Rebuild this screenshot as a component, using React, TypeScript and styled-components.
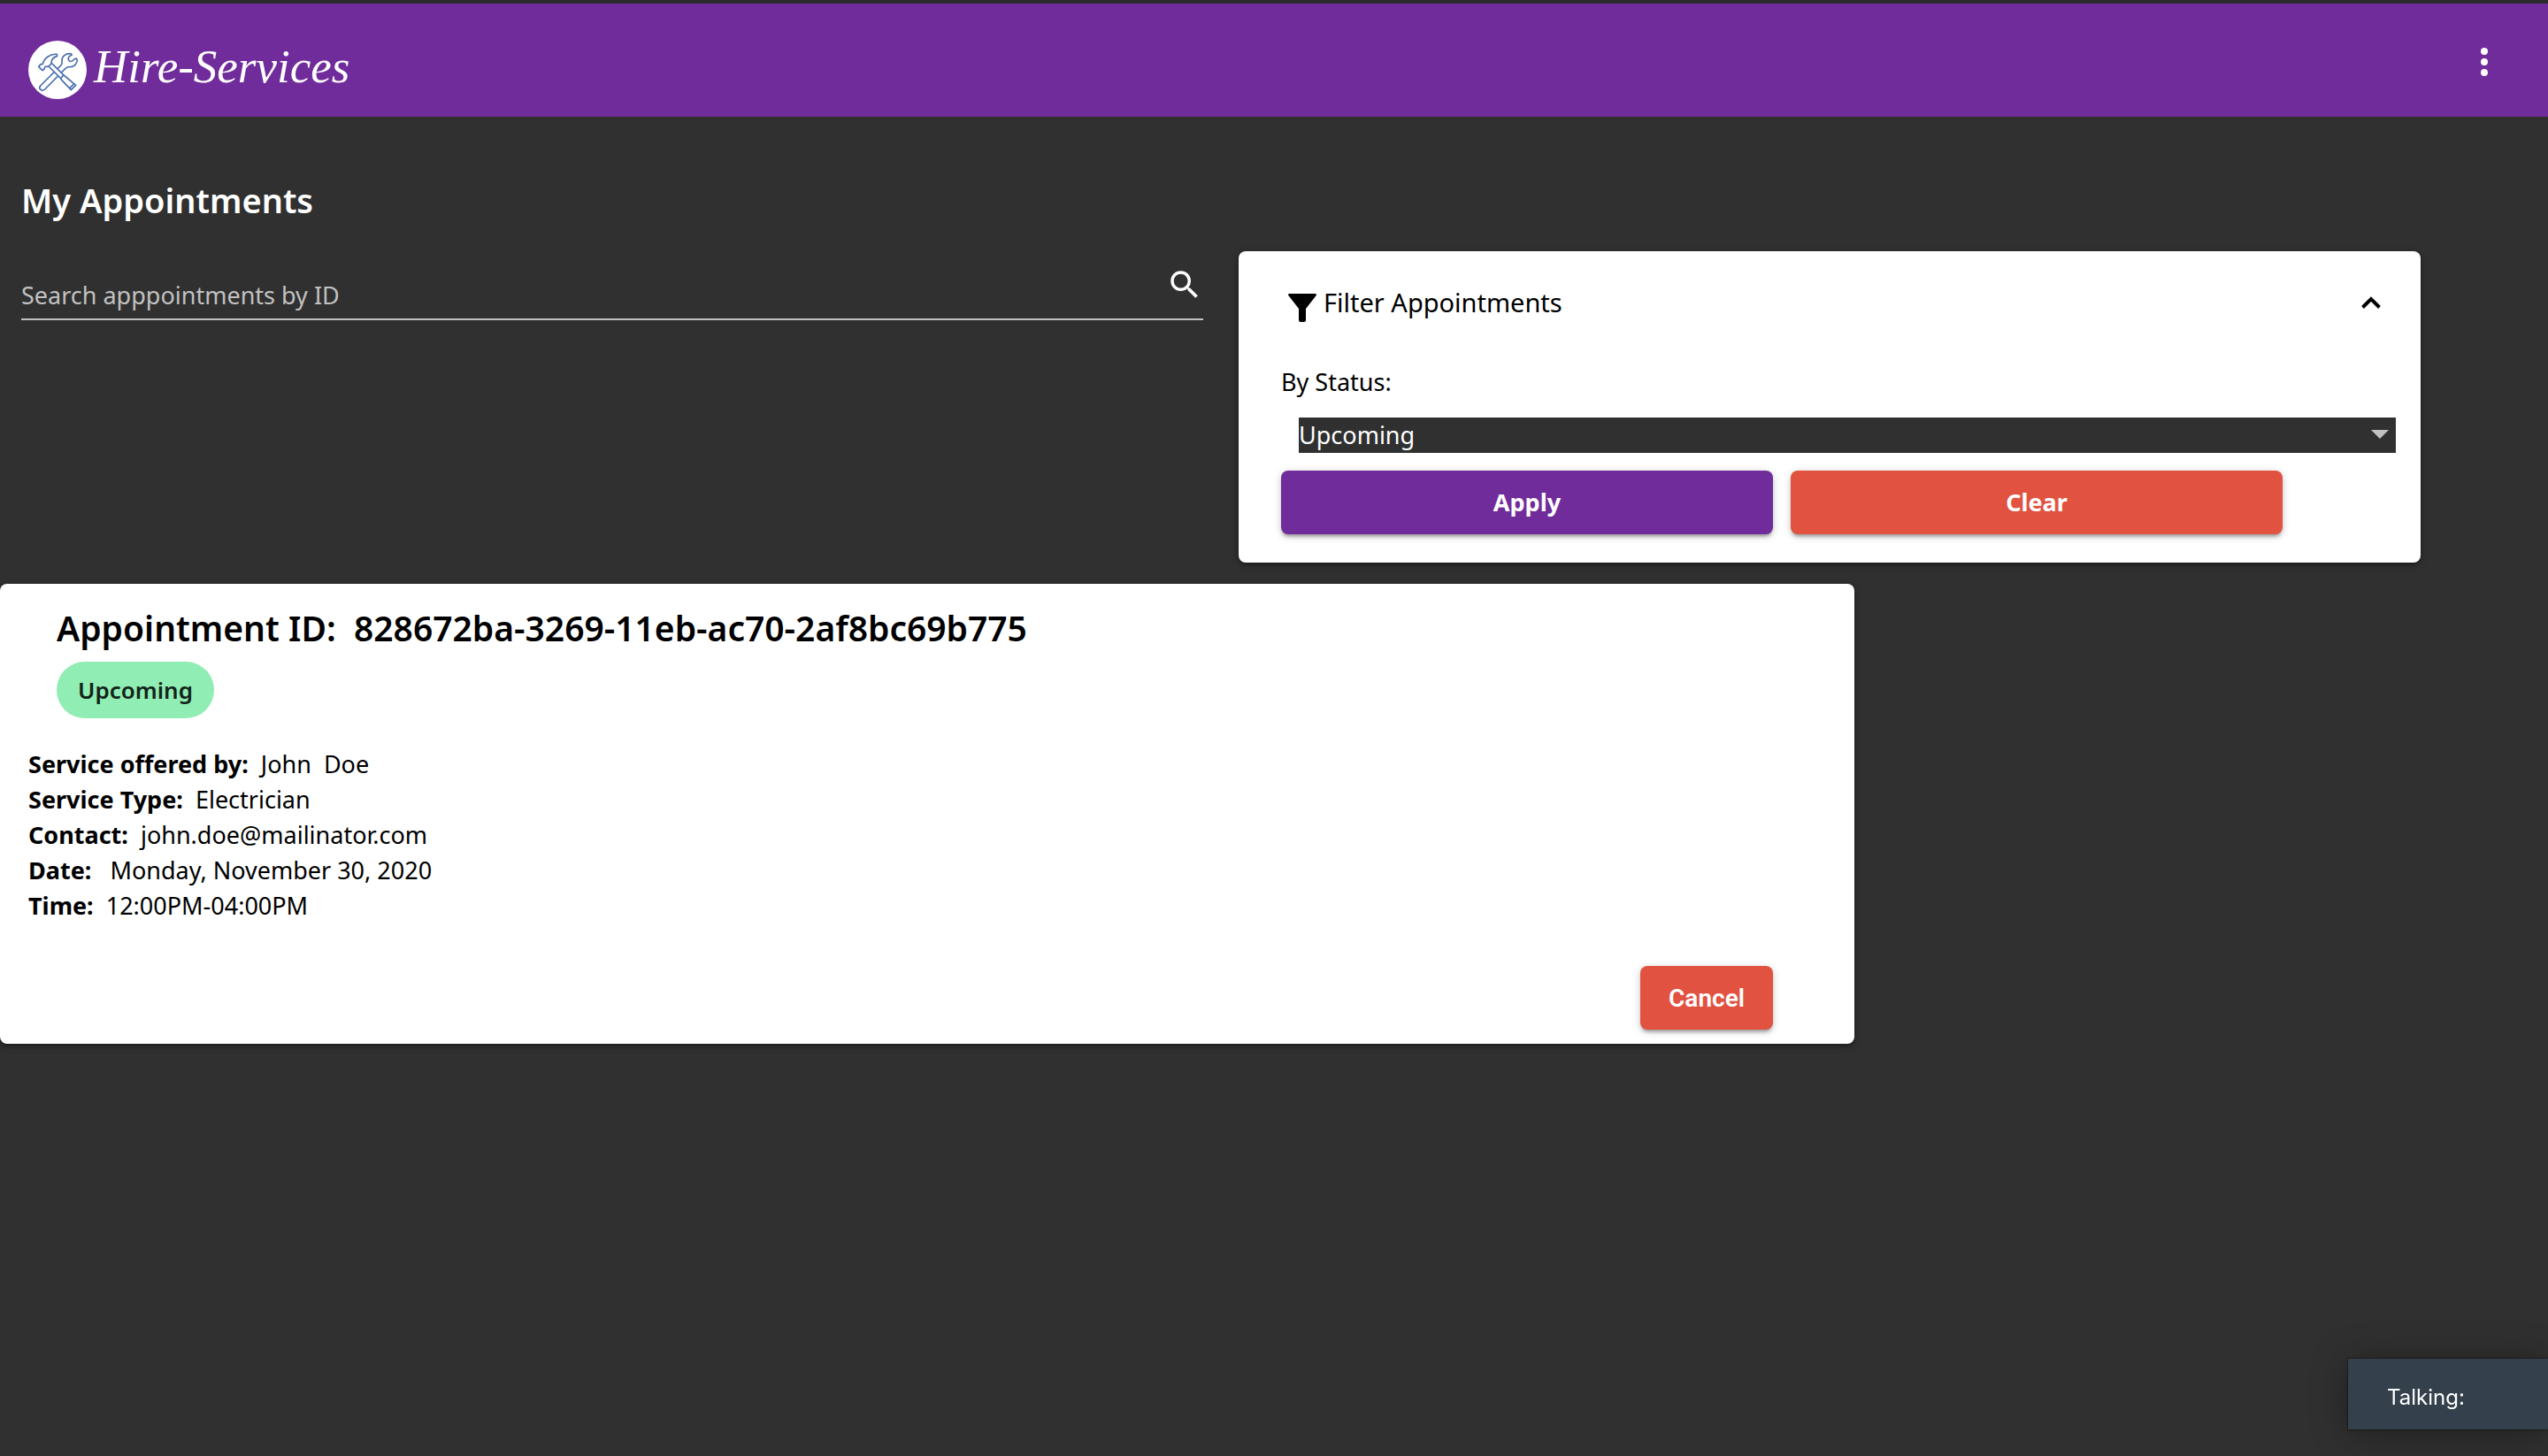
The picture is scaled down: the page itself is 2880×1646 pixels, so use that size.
import React, { useState } from "react";
import styled, { createGlobalStyle } from "styled-components";

const sans = `"Noto Sans", "Open Sans", sans-serif`;

const GlobalStyle = createGlobalStyle`
  *, *::before, *::after { box-sizing: border-box; }
  body {
    margin: 0;
    min-height: 100vh;
    background: #303030;
    color: #fff;
    font-family: ${sans};
    font-size: 27px;
    line-height: 40px;
  }
  h1, h2, p, dl, dd { margin: 0; }
  button, input, select { font: inherit; }
`;

const Header = styled.header`
  display: flex;
  align-items: center;
  justify-content: space-between;
  height: 132px;
  padding: 0 52px 0 32px;
  background: #712c9b;
  border-top: 4px solid #2b2b2d;
`;

const Brand = styled.a`
  display: flex;
  align-items: center;
  gap: 8px;
  padding-top: 22px;
  color: #fff;
  text-decoration: none;
`;

const BrandName = styled.span`
  font-family: "Liberation Serif", serif;
  font-style: italic;
  font-size: 53px;
  line-height: 66px;
  padding-bottom: 8px;
`;

const IconButton = styled.button`
  display: flex;
  align-items: center;
  justify-content: center;
  padding: 0;
  border: 0;
  background: none;
  color: inherit;
  cursor: pointer;
`;

const MenuButton = styled(IconButton)`
  width: 40px;
  height: 48px;
  padding-top: 4px;
`;

const Title = styled.h1`
  padding: 70px 24px 0;
  font-size: 38px;
  font-weight: 600;
  line-height: 48px;
`;

const Controls = styled.section`
  display: grid;
  grid-template-columns: 1fr 1fr;
  align-items: start;
  gap: 40px;
  padding: 34px 5% 24px 24px;
`;

const SearchField = styled.form`
  display: flex;
  align-items: center;
  height: 78px;
  border-bottom: 2px solid #c1c1c1;
`;

const SearchInput = styled.input`
  flex: 1;
  min-width: 0;
  padding: 24px 0 0;
  border: 0;
  outline: 0;
  background: none;
  color: #fff;
  line-height: 40px;
  &::placeholder {
    color: #c1c1c1;
    opacity: 1;
  }
`;

const Card = styled.section`
  background: #fff;
  color: #000;
  border-radius: 8px;
  box-shadow: 0 2px 4px rgba(0, 0, 0, 0.3), 0 2px 10px rgba(0, 0, 0, 0.2);
`;

const FilterCard = styled(Card)`
  padding: 38px 44px 32px 48px;
`;

const FilterHeader = styled.div`
  display: flex;
  align-items: center;
  justify-content: space-between;
  height: 40px;
  padding: 0 0 0 8px;
`;

const FilterTitle = styled.h2`
  display: flex;
  align-items: center;
  gap: 8px;
  font-size: 29px;
  font-weight: 400;
  svg {
    margin-top: 12px;
  }
`;

const StatusLabel = styled.label`
  display: block;
  padding: 50px 0 20px;
  line-height: 40px;
`;

const SelectBox = styled.div`
  position: relative;
  margin: 0 -16px 20px 20px;
  height: 40px;
`;

const StatusSelect = styled.select`
  display: block;
  width: 100%;
  height: 40px;
  padding: 0 40px 0 0;
  appearance: none;
  border: 0;
  border-radius: 0;
  background: #303030;
  color: #fff;
`;

const SelectArrow = styled.svg`
  position: absolute;
  right: 8px;
  top: 14px;
  pointer-events: none;
`;

const ButtonRow = styled.div`
  display: flex;
  gap: 20px;
  padding-right: 112px;
`;

const Button = styled.button<{ $tone: "primary" | "warn"; $grow?: boolean }>`
  flex: ${(p) => (p.$grow ? "1" : "none")};
  height: 72px;
  padding: 0 32px;
  border: 0;
  border-radius: 8px;
  background: ${(p) => (p.$tone === "primary" ? "#712c9b" : "#e15241")};
  color: #fff;
  font-size: 27px;
  font-weight: 700;
  cursor: pointer;
  box-shadow: 0 4px 4px -2px rgba(0, 0, 0, 0.35), 0 2px 10px rgba(0, 0, 0, 0.2);
`;

const CancelButton = styled(Button)`
  padding-top: 2px;
  font-family: Roboto, sans-serif;
  font-size: 28px;
  font-weight: 600;
`;

const AppointmentCard = styled(Card)`
  max-width: 2096px;
  padding: 26px 92px 16px 32px;
`;

const AppointmentHead = styled.div`
  padding-left: 32px;
`;

const AppointmentId = styled.h2`
  font-size: 39px;
  font-weight: 600;
  line-height: 48px;
  white-space: pre-wrap;
`;

const Status = styled.span`
  display: inline-flex;
  align-items: center;
  height: 64px;
  margin-top: 14px;
  padding: 0 24px;
  border-radius: 32px;
  background: #90edb3;
  color: #12241a;
  font-weight: 600;
  font-size: 26px;
`;

const Details = styled.dl`
  padding-top: 32px;
`;

const Detail = styled.div`
  display: flex;
  line-height: 40px;
  white-space: pre;
  dt {
    font-weight: 700;
  }
`;

const Actions = styled.div`
  display: flex;
  justify-content: flex-end;
  padding-top: 48px;
`;

const TalkingPanel = styled.aside`
  position: fixed;
  right: 0;
  bottom: 30px;
  width: 226px;
  padding: 24px 44px 16px;
  background: #34404b;
  font-family: Inter, sans-serif;
  font-size: 24px;
  line-height: 40px;
  box-shadow: 0 4px 40px rgba(0, 0, 0, 0.35), 0 0 2px #000;
`;

const LogoMark = () => (
  <svg width="66" height="66" viewBox="36 48 198 198" aria-hidden="true">
    <circle cx="135" cy="147" r="99" fill="#fff" />
    <g fill="#fff" stroke="#4c70ad" strokeWidth="5" strokeLinejoin="round">
      <path d="M77 201 L142 136 C150 130 152 126 150 117 C149 102 160 91 180 92 L184 96 C174 100 170 105 172 112 C176 121 185 120 190 112 L198 108 C203 112 203 119 197 127 C191 136 183 138 173 137 C167 137 164 140 159 145 L92 213 C82 222 69 211 77 201 Z" />
      <path d="M71 136 L78 128 L85 127 C88 109 110 91 133 94 L134 100 C121 104 114 109 114 123 L121 130 L155 164 L152 172 L146 176 L105 135 L97 136 C94 134 91 138 90 144 L84 149 Z" />
      <path d="M146 176 L155 165 L160 168 L197 199 L181 215 L149 181 Z" />
      <path d="M105 135 L115 125 M176 209 L192 194" fill="none" />
    </g>
  </svg>
);

const MoreIcon = () => (
  <svg width="8" height="34" viewBox="0 0 8 34" fill="currentColor" aria-hidden="true">
    <circle cx="4" cy="5" r="4" />
    <circle cx="4" cy="17" r="4" />
    <circle cx="4" cy="29" r="4" />
  </svg>
);

const SearchIcon = () => (
  <svg width="42" height="42" viewBox="0 0 24 24" fill="currentColor" aria-hidden="true">
    <path d="M15.5 14h-.79l-.28-.27A6.47 6.47 0 0 0 16 9.5 6.5 6.5 0 1 0 9.500 16c1.610 0 3.090-.59 4.230-1.570l.27.28v.79l5 4.990L20.490 19l-4.990-5zm-6 0C7.010 14 5 11.990 5 9.500S7.010 5 9.500 5 14 7.010 14 9.500 11.990 14 9.500 14z" />
  </svg>
);

const FilterIcon = () => (
  <svg width="32" height="32" viewBox="0 0 32 32" aria-hidden="true">
    <path d="M1.500 0h29c1.300 0 1.800 1.200 1.200 2.100L20 17v13c0 1.200-.8 2-2 2h-4c-1.200 0-2-.8-2-2V17L.3 2.100C-.3 1.200.2 0 1.500 0z" />
  </svg>
);

const ChevronUp = () => (
  <svg width="24" height="16" viewBox="0 0 24 16" fill="none" stroke="currentColor" strokeWidth="4" aria-hidden="true">
    <path d="M2.500 13.500 12 4l9.500 9.500" />
  </svg>
);

const details = [
  { label: "Service offered by:", value: "  John  Doe" },
  { label: "Service Type:", value: "  Electrician" },
  { label: "Contact:", value: "  john.doe@mailinator.com" },
  { label: "Date:", value: "   Monday, November 30, 2020" },
  { label: "Time:", value: "  12:00PM-04:00PM" },
];

export default function App() {
  const [open, setOpen] = useState(true);
  const [status, setStatus] = useState("Upcoming");
  const [query, setQuery] = useState("");

  return (
    <>
      <GlobalStyle />
      <Header>
        <Brand href="#">
          <LogoMark />
          <BrandName>Hire-Services</BrandName>
        </Brand>
        <MenuButton type="button" aria-label="Menu">
          <MoreIcon />
        </MenuButton>
      </Header>
      <main>
        <Title>My Appointments</Title>
        <Controls>
          <SearchField onSubmit={(e) => e.preventDefault()}>
            <SearchInput
              aria-label="Search apppointments by ID"
              placeholder="Search apppointments by ID"
              value={query}
              onChange={(e) => setQuery(e.target.value)}
            />
            <IconButton type="submit" aria-label="Search">
              <SearchIcon />
            </IconButton>
          </SearchField>
          <FilterCard>
            <FilterHeader>
              <FilterTitle>
                <FilterIcon />
                Filter Appointments
              </FilterTitle>
              <IconButton type="button" aria-label="Toggle filters" aria-expanded={open} onClick={() => setOpen(!open)}>
                <ChevronUp />
              </IconButton>
            </FilterHeader>
            {open && (
              <>
                <StatusLabel htmlFor="status">By Status:</StatusLabel>
                <SelectBox>
                  <StatusSelect id="status" value={status} onChange={(e) => setStatus(e.target.value)}>
                    <option>Upcoming</option>
                    <option>Completed</option>
                    <option>Cancelled</option>
                  </StatusSelect>
                  <SelectArrow width="20" height="10" viewBox="0 0 20 10" aria-hidden="true">
                    <path d="M0 0h20L10 10z" fill="#c1c1c1" />
                  </SelectArrow>
                </SelectBox>
                <ButtonRow>
                  <Button type="button" $tone="primary" $grow>Apply</Button>
                  <Button type="button" $tone="warn" $grow>Clear</Button>
                </ButtonRow>
              </>
            )}
          </FilterCard>
        </Controls>
        <AppointmentCard>
          <AppointmentHead>
            <AppointmentId>{"Appointment ID:  828672ba-3269-11eb-ac70-2af8bc69b775"}</AppointmentId>
            <Status>Upcoming</Status>
          </AppointmentHead>
          <Details>
            {details.map((d) => (
              <Detail key={d.label}>
                <dt>{d.label}</dt>
                <dd>{d.value}</dd>
              </Detail>
            ))}
          </Details>
          <Actions>
            <CancelButton type="button" $tone="warn">Cancel</CancelButton>
          </Actions>
        </AppointmentCard>
      </main>
      <TalkingPanel>Talking:</TalkingPanel>
    </>
  );
}
